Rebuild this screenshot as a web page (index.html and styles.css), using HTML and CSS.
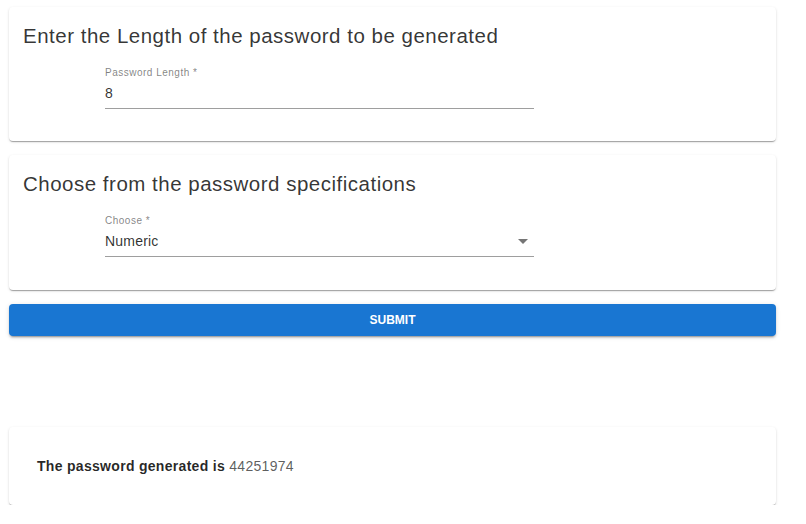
FILE: index.html
```html
<!DOCTYPE html>
<html lang="en">
<head>
<meta charset="utf-8">
<title>Password Generator</title>
<link rel="stylesheet" href="styles.css">
</head>
<body>
<main class="page">
  <section class="card">
    <h2 class="card-title">Enter the Length of the password to be generated</h2>
    <div class="field">
      <label class="field-label">Password Length *</label>
      <div class="field-input">8</div>
    </div>
  </section>
  <section class="card">
    <h2 class="card-title">Choose from the password specifications</h2>
    <div class="field">
      <label class="field-label">Choose *</label>
      <div class="field-input select">
        <span>Numeric</span>
        <svg class="arrow" width="10" height="5" viewBox="0 0 10 5"><path d="M0 0 L10 0 L5 5 Z" fill="#757575"/></svg>
      </div>
    </div>
  </section>
  <button class="submit">SUBMIT</button>
  <section class="card result">
    <p class="result-text"><strong>The password generated is</strong> <span class="pw">44251974</span></p>
  </section>
</main>
</body>
</html>
```

FILE: styles.css
```css
html, body {
  margin: 0;
  padding: 0;
  background: #fff;
  font-family: "Liberation Sans", Arial, sans-serif;
}
.page {
  padding: 7px 30px 0 9px;
  display: flex;
  flex-direction: column;
}
.card {
  background: #fff;
  border-radius: 4px;
  box-shadow: 0 2px 1px -1px rgba(0,0,0,0.2), 0 1px 1px 0 rgba(0,0,0,0.14), 0 1px 3px 0 rgba(0,0,0,0.12);
  padding: 17px 14px 0 14px;
  height: 134px;
  box-sizing: border-box;
}
.card + .card { margin-top: 14px; }
.card:nth-child(2) { height: 135px; }
.card-title {
  margin: 0;
  font-size: 20.5px;
  line-height: 24px;
  font-weight: 400;
  letter-spacing: 0.5px;
  color: rgba(0,0,0,0.8);
}
.field {
  margin: 19px 0 0 82px;
  width: 429px;
  display: flex;
  flex-direction: column;
}
.field-label {
  font-size: 10px;
  line-height: 12px;
  letter-spacing: 0.5px;
  color: rgba(0,0,0,0.5);
}
.field-input {
  font-size: 14px;
  line-height: 18px;
  letter-spacing: 0.2px;
  padding: 5px 0 6px;
  color: rgba(0,0,0,0.82);
  border-bottom: 1px solid rgba(0,0,0,0.38);
}
.select {
  display: flex;
  justify-content: space-between;
  align-items: center;
}
.arrow { margin-right: 6px; }
.submit {
  margin-top: 14px;
  height: 32px;
  border: none;
  border-radius: 4px;
  background: #1976d2;
  color: #fff;
  font-family: "Liberation Sans", Arial, sans-serif;
  font-size: 12px;
  font-weight: 700;
  box-shadow: 0 3px 1px -2px rgba(0,0,0,0.2), 0 2px 2px 0 rgba(0,0,0,0.14), 0 1px 5px 0 rgba(0,0,0,0.12);
}
.card.result {
  margin-top: 91px;
  height: 78px;
  padding: 0 28px;
  display: flex;
  align-items: center;
}
.result-text {
  margin: 0;
  font-size: 14px;
  letter-spacing: 0.3px;
  color: rgba(0,0,0,0.85);
}
.result-text strong { font-weight: 700; }
.pw { color: rgba(0,0,0,0.65); }
```
